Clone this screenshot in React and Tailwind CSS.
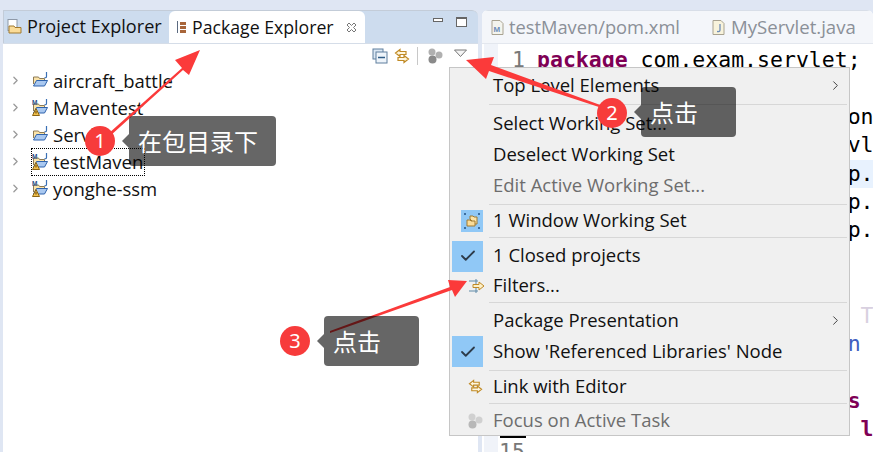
import { ChevronRight, Check } from "lucide-react";

const uiFont = "font-['Open_Sans','Noto_Sans',sans-serif]";

const projects = [
  { name: "aircraft_battle", maven: false },
  { name: "Maventest", maven: true },
  { name: "Servlet", maven: false },
  { name: "testMaven", maven: true, focused: true },
  { name: "yonghe-ssm", maven: true },
];

// only the tails of these lines stick out from behind the menu
const codeLines = [
  { text: "package", rest: " com.exam.servlet;", keyword: true },
  { text: "" },
  { text: "", rest: "import java.io.IOException;" },
  { text: "", rest: "import javax.servlet.ServletException;" },
  { text: "", rest: "import javax.servlet.http.HttpServlet;", active: true },
  { text: "", rest: "import javax.servlet.http.HttpServletRequest;" },
  { text: "", rest: "import javax.servlet.http.HttpServletResponse;" },
  { text: "" },
  { text: "" },
  { text: "", rest: "                         T", pale: true },
  { text: "", rest: "                        n", comment: true },
  { text: "" },
  { text: "                        s", keyword: true },
  { text: "                         l", keyword: true },
];

function FolderIcon({ maven }) {
  return (
    <svg width="17" height="17" viewBox="0 0 17 17" className="shrink-0">
      <path d="M1.5 12V5h5l1 1.500h5V9" fill="#fbe3a8" stroke="#8d7a55" />
      <path d="M1.5 14l3-5.500h11l-3 5.500z" fill="#a9c8f0" stroke="#2f63ad" />
      <path d="M14.5 0v4.500q0 1.500-2 1.200" fill="none" stroke="#3a70b5" strokeWidth="1.200" />
      {maven && (
        <>
          <text x="0" y="5.500" fontSize="6.500" fontWeight="700" fill="#2b4f86" fontFamily="Liberation Sans">
            M
          </text>
          <path d="M4 9.500l3.500 7h-7z" fill="#f2c14e" stroke="#8a6414" />
          <rect x="3.500" y="12" width="1" height="2.500" fill="#5a3d05" />
        </>
      )}
    </svg>
  );
}

function LinkIcon({ size = 16 }) {
  return (
    <svg width={size} height={size} viewBox="0 0 16 16" fill="#fff6dd" stroke="#c08a25" strokeWidth="1.200">
      <path d="M6 1.500L1.500 5 6 8.500V6.500h6V3.500H6z" />
      <path d="M10 7.500l4.500 3.500L10 14.500v-2H4v-3h6z" />
    </svg>
  );
}

function FocusIcon({ light }) {
  const a = light ? "#d0d0d0" : "#b0b0b0";
  const b = light ? "#b8b8b8" : "#8a8a8a";
  return (
    <svg width="16" height="16" viewBox="0 0 16 16">
      <circle cx="5" cy="4" r="3.500" fill={a} />
      <circle cx="12" cy="7" r="3.500" fill={a} />
      <circle cx="5.500" cy="11.500" r="4" fill={b} />
    </svg>
  );
}

function MenuSep() {
  return <div className="h-px ml-[39px] mr-[2px] bg-[#d7d7d7]" />;
}

function MenuRow({ label, disabled, arrow, h = "h-[31px]", children }) {
  return (
    <div className={`flex items-center relative ${h}`}>
      <div className="w-[43px] h-full shrink-0 flex items-center justify-center relative left-[-4px]">{children}</div>
      <span className={`text-[18.500px] leading-none mb-[1px] ${disabled ? "text-[#6d6d6d]" : "text-[#111111]"}`}>
        {label}
      </span>
      {arrow && <ChevronRight size={15} className="absolute right-[6px] text-[#444444]" strokeWidth={1.600} />}
    </div>
  );
}

function CheckBox() {
  return (
    <div className="w-[31px] h-[31px] bg-[#90c8f6] flex items-center justify-center">
      <Check size={18} strokeWidth={2.400} className="text-[#2d3b4a]" />
    </div>
  );
}

function Callout({ className, label }) {
  return (
    <div
      className={`absolute h-[50px] rounded-[4px] bg-black/60 text-white text-[24px] flex items-center pl-[9px] font-['Noto_Sans_CJK_SC',sans-serif] ${className}`}
    >
      <div className="absolute left-[-7px] top-[18px] w-0 h-0 border-y-[7px] border-y-transparent border-r-[7px] border-r-black/60" />
      {label}
    </div>
  );
}

function Badge({ className, n }) {
  return (
    <div
      className={`absolute w-[30px] h-[30px] rounded-full bg-[#f73b3b] text-white text-[20px] flex items-center justify-center font-['Noto_Sans',sans-serif] ${className}`}
    >
      {n}
    </div>
  );
}

export default function App() {
  return (
    <div className={`relative w-[873px] h-[452px] overflow-hidden flex pt-[10px] pl-[3px] bg-[#dfe6f3] ${uiFont}`}>
      {/* Package explorer */}
      <div className="w-[475px] shrink-0 bg-white flex flex-col rounded-t-[6px]">
        <div className="h-[33px] flex bg-[#cddcee] border-t border-[#c3ccd8] rounded-tr-[6px] text-[17.700px] text-[#111111]">
          <div className="w-[166px] flex items-center gap-[3px] pl-[2px] border-l border-[#c3ccd8]">
            <svg width="18" height="18" viewBox="0 0 18 18" className="shrink-0">
              <rect x="2" y="1.500" width="9" height="11" fill="#ffffff" stroke="#8e99a8" />
              <path d="M3 14V8h5l1 1.500h6V15H3z" fill="#fbdc98" stroke="#a07a30" />
            </svg>
            <span className="text-[18.100px]">Project Explorer</span>
          </div>
          <div className="w-[196px] bg-white flex items-center rounded-t-[6px] pl-[7px] gap-[5px] relative">
            <svg width="11" height="13" viewBox="0 0 11 13" className="shrink-0">
              <path d="M1.500 0v12" stroke="#5b6a80" />
              <rect x="4" y="1" width="6" height="3" fill="#a8653a" />
              <rect x="4" y="5" width="6" height="3" fill="#a8653a" />
              <rect x="4" y="9" width="6" height="3" fill="#a8653a" />
            </svg>
            <span>Package Explorer</span>
            <svg width="11" height="11" viewBox="0 0 11 11" className="absolute right-[8px] top-[11px]" stroke="#777777" fill="none">
              <path d="M1 3l2-2 2.500 2.500L8 1l2 2-2.500 2.500L10 8 8 10 5.500 7.500 3 10 1 8l2.500-2.500z" />
            </svg>
          </div>
          <div className="flex-1 flex items-start justify-end gap-[13px] pt-[6px] pr-[11px]">
            <div className="w-[10px] h-[4px] mt-[1px] border border-[#666666] bg-white" />
            <div className="w-[11px] h-[10px] border border-[#666666] border-t-2 bg-white" />
          </div>
        </div>

        <div className="h-[24px] flex items-center justify-end pr-[10px] border-t border-[#d5dde8]">
          <svg width="16" height="16" viewBox="0 0 16 16" className="mr-[6px]">
            <rect x="1" y="1" width="10" height="10" fill="#dbe7f3" stroke="#5f7f9e" />
            <rect x="4" y="4" width="11" height="11" fill="#eef4fa" stroke="#5f7f9e" />
            <path d="M6 9.500h7" stroke="#2f5c86" strokeWidth="1.500" />
          </svg>
          <LinkIcon />
          <div className="w-px h-[18px] bg-[#c8c8c8] ml-[7px] mr-[9px]" />
          <FocusIcon />
          <svg width="15" height="9" viewBox="0 0 15 9" className="ml-[10px] mb-[4px]">
            <path d="M1.500 1h12l-6 6.500z" fill="#f4f4f4" stroke="#777777" />
          </svg>
        </div>

        <ul className="text-[18.500px] text-[#111111]">
          {projects.map((p) => (
            <li key={p.name} className="h-[27px] flex items-center">
              <ChevronRight size={13} strokeWidth={2.400} className="ml-[6px] mr-[10px] text-[#9a9a9a]" />
              <div
                className={`flex items-center h-[26px] gap-[4px] pr-[1px] ${
                  p.focused ? "outline outline-1 outline-dotted outline-black" : ""
                }`}
              >
                <FolderIcon maven={p.maven} />
                <span>{p.name}</span>
              </div>
            </li>
          ))}
        </ul>
      </div>

      {/* Editor */}
      <div className="ml-[4px] flex-1 bg-white flex flex-col rounded-t-[6px] overflow-hidden">
        <div className="h-[33px] shrink-0 flex items-center bg-[#f4f6fa] border-t border-[#d8dee8] text-[18.300px] text-[#8b9098] pl-[9px]">
          <svg width="13" height="15" viewBox="0 0 13 15" className="shrink-0 mr-[5px]">
            <path d="M1 .5h8l3 3v11H1z" fill="#f4f4ee" stroke="#a8a290" />
            <text x="2.500" y="12" fontSize="8" fontWeight="700" fill="#6d8db8" fontFamily="Liberation Sans">
              M
            </text>
          </svg>
          <span>testMaven/pom.xml</span>
          <svg width="13" height="15" viewBox="0 0 13 15" className="shrink-0 ml-[32px] mr-[6px]">
            <path d="M1 .5h8l3 3v11H1z" fill="#f8f3dc" stroke="#a8a290" />
            <path d="M8 4v6q0 2-3 1.500" fill="none" stroke="#6d8db8" strokeWidth="1.300" />
          </svg>
          <span className="text-[18.600px]">MyServlet.java</span>
        </div>
        <div className="flex-1 flex border-t border-[#e3e7ee] font-['DejaVu_Sans_Mono',monospace] text-[21.500px] leading-[28.400px] pt-[2px]">
          <div className="w-[14px] ml-[2px] shrink-0 bg-[#f0f3f9] -mt-[2px]" />
          <div className="w-[36px] shrink-0 text-[#787878] relative">
            <div className="pl-[14px]">1</div>
            <div className="absolute left-[2px] top-[390px] w-[26px] h-[2px] bg-black" />
            <div className="absolute left-[1px] top-[392px]">15</div>
          </div>
          <div className="flex-1 min-w-0 whitespace-pre">
            {codeLines.map((line, i) => (
              <div key={i} className={`h-[28.400px] pl-[3px] ${line.active ? "bg-[#e8f2fe]" : ""}`}>
                <span className={line.keyword ? "font-bold text-[#7f0055]" : ""}>{line.text}</span>
                <span className={line.comment ? "text-[#3f5fbf]" : line.pale ? "text-[#d8d0e0]" : "text-black"}>
                  {line.rest}
                </span>
              </div>
            ))}
          </div>
        </div>
      </div>

      {/* View menu */}
      <div className="absolute left-[449px] top-[67px] w-[401px] h-[369px] bg-[#f0f0f0] border border-[#c6c6c6] text-[#111111] overflow-hidden">
        <div className="pt-[2px] pb-[3px]">
          <MenuRow label="Top Level Elements" arrow />
        </div>
        <MenuSep />
        <div className="pt-[3px] pb-[3px]">
          <MenuRow label="Select Working Set..." />
          <MenuRow label="Deselect Working Set" />
          <MenuRow label="Edit Active Working Set..." disabled />
        </div>
        <MenuSep />
        <div className="pb-[1px]">
          <MenuRow label="1 Window Working Set">
            <div className="w-[22px] h-[22px] ml-[9px] bg-[#90c8f6] flex items-center justify-center">
              <svg width="18" height="16" viewBox="0 0 18 16">
                <path d="M7 6V3h3l1 1h3v7h-2z" fill="#fbe3a8" stroke="#a07a30" />
                <path d="M4 13V7h3l1 1h4v5z" fill="#fbdc98" stroke="#a07a30" />
                <path d="M1 1h2M15 1h2M1 15h2M15 15h2" stroke="#3c6ea0" strokeWidth="2" />
              </svg>
            </div>
          </MenuRow>
        </div>
        <MenuSep />
        <div className="pt-[3px] pb-[2px]">
          <MenuRow label="1 Closed projects" h="h-[30px]">
            <CheckBox />
          </MenuRow>
          <MenuRow label="Filters..." h="h-[29px]">
            <svg width="17" height="14" viewBox="0 0 17 14" className="ml-[17px]">
              <path d="M1 2h9M1 12h9" stroke="#5f8aa8" />
              <path d="M8 0v14" stroke="#5f8aa8" />
              <path d="M5 5.500h6V3l5 4-5 4V8.500H5z" fill="#fdf0c8" stroke="#c08a25" />
            </svg>
          </MenuRow>
        </div>
        <MenuSep />
        <div className="pt-[2px] pb-[3px]">
          <MenuRow label="Package Presentation" arrow />
          <MenuRow label="Show 'Referenced Libraries' Node">
            <CheckBox />
          </MenuRow>
        </div>
        <MenuSep />
        <div className="pb-[1px]">
          <MenuRow label="Link with Editor">
            <div className="ml-[15px] flex">
              <LinkIcon size={15} />
            </div>
          </MenuRow>
        </div>
        <MenuSep />
        <div className="pt-[2px]">
          <MenuRow label="Focus on Active Task" h="h-[30px]" disabled>
            <div className="ml-[15px] flex">
              <FocusIcon light />
            </div>
          </MenuRow>
        </div>
      </div>

      {/* Red arrows */}
      <svg width="873" height="452" viewBox="0 0 873 452" className="absolute left-0 top-0 pointer-events-none" fill="#fb3a3a">
        <path d="M108 134L182 68 175 60 200 50 189 75 183 70 110 136z" />
        <path d="M602 108L489 71 486 79 466 60 494 57 491 65 603 106z" />
        <path d="M330 333L452 290 455 297 467 281 448 280 450 287 330 331z" />
      </svg>

      <Callout className="left-[129px] top-[116px] w-[147px]" label="在包目录下" />
      <Callout className="left-[641px] top-[87px] w-[95px]" label="点击" />
      <Callout className="left-[324px] top-[316px] w-[95px]" label="点击" />
      <Badge className="left-[85px] top-[126px]" n="1" />
      <Badge className="left-[597px] top-[98px]" n="2" />
      <Badge className="left-[280px] top-[326px]" n="3" />
    </div>
  );
}
